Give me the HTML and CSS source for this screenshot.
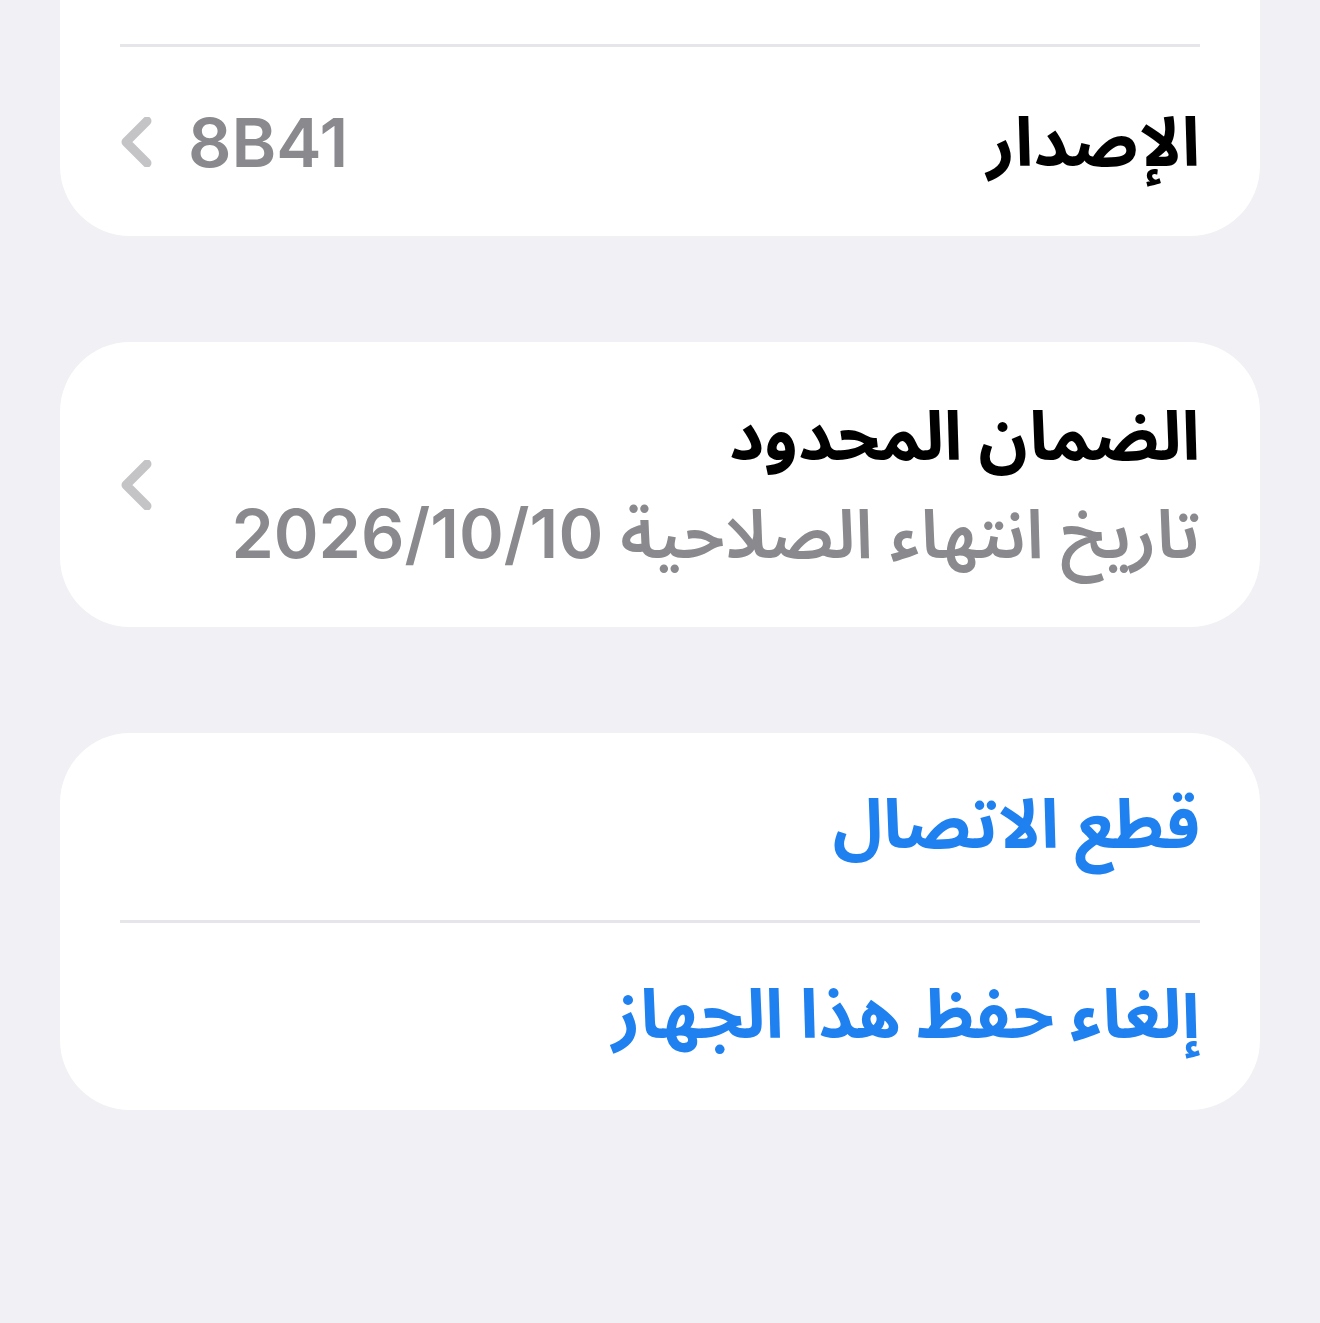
FILE: index.html
```html
<!DOCTYPE html>
<html lang="ar" dir="rtl">
<head>
  <meta charset="UTF-8" />
  <meta name="viewport" content="width=device-width, initial-scale=1.0" />
  <title>حول</title>
  <link rel="stylesheet" href="styles.css">
</head>
<body>

  <div class="card card-cut">
    <div class="spacer"></div>
    <div class="sep"></div>
    <div class="row row-first">
      <span class="label">الإصدار</span>
      <span class="value" dir="ltr">8B41</span>
      <svg class="chev" viewBox="0 0 36 50" width="36" height="50">
        <path d="M29 4 L8 25 L29 46" />
      </svg>
    </div>
  </div>

  <div class="card">
    <div class="row row-tall">
      <div class="stack">
        <span class="label">الضمان المحدود</span>
        <span class="sub">تاريخ انتهاء الصلاحية 2026/10/10</span>
      </div>
      <svg class="chev" viewBox="0 0 36 50" width="36" height="50">
        <path d="M29 4 L8 25 L29 46" />
      </svg>
    </div>
  </div>

  <div class="card">
    <div class="row">
      <span class="action">قطع الاتصال</span>
    </div>
    <div class="sep"></div>
    <div class="row">
      <span class="action">إلغاء حفظ هذا الجهاز</span>
    </div>
  </div>

</body>
</html>
```

FILE: styles.css
```css
* {
  box-sizing: border-box;
}

body {
  margin: 0;
  padding: 0 60px;
  background-color: #f0f0f5;
  font-family: Inter, "Noto Sans Arabic", "DejaVu Sans", sans-serif;
  min-height: 100vh;
}

.card {
  background-color: #fff;
  border-radius: 70px;
  margin-bottom: 106px;
  padding: 0 60px;
}

.card-cut {
  border-top-left-radius: 0;
  border-top-right-radius: 0;
}

.spacer {
  height: 44px;
}

.sep {
  height: 3px;
  background-color: #e5e5ea;
}

.row {
  display: flex;
  align-items: center;
  height: 187px;
}

.row-first {
  height: 189px;
}

.row-tall {
  height: 285px;
}

.stack {
  display: flex;
  flex-direction: column;
  gap: 16px;
}

.label {
  font-size: 68px;
  font-weight: 700;
  color: #000;
  line-height: 1.2;
}

.value {
  margin-right: auto;
  font-size: 68px;
  font-weight: 600;
  color: #8a8a8e;
}

.sub {
  font-size: 68px;
  font-weight: 600;
  color: #8a8a8e;
  line-height: 1.2;
}

.chev {
  margin-right: 34px;
  margin-left: -2px;
  fill: none;
  stroke: #c4c4c7;
  stroke-width: 9;
  stroke-linecap: round;
  stroke-linejoin: round;
}

.row-tall .chev {
  margin-right: auto;
}

.action {
  font-size: 68px;
  font-weight: 700;
  color: #1f80f0;
}
```
